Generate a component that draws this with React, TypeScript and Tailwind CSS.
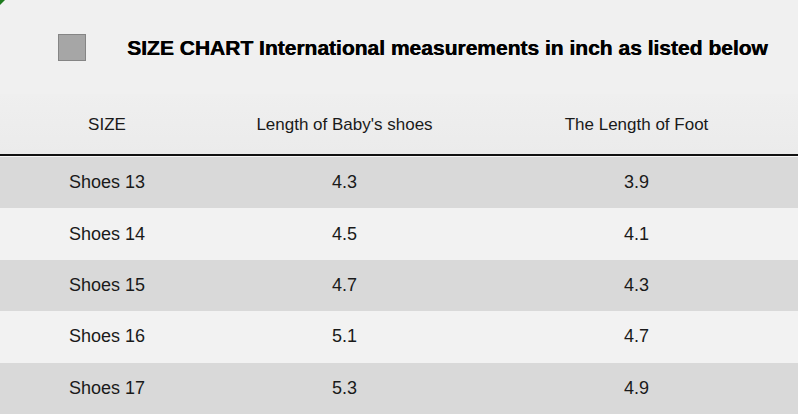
import React from 'react';

const rows = [
  { size: 'Shoes 13', shoe: '4.3', foot: '3.9' },
  { size: 'Shoes 14', shoe: '4.5', foot: '4.1' },
  { size: 'Shoes 15', shoe: '4.7', foot: '4.3' },
  { size: 'Shoes 16', shoe: '5.1', foot: '4.7' },
  { size: 'Shoes 17', shoe: '5.3', foot: '4.9' },
];

const col1 = 'w-[214px] flex justify-center';
const col2 = 'w-[261px] flex justify-center';
const col3 = 'flex-1 flex justify-center';

export default function App() {
  return (
    <div
      className="relative w-[798px] h-[414px] flex flex-col bg-[#f0f0f0] text-[#1a1a1a] overflow-hidden"
      style={{ fontFamily: '"Liberation Sans", Arial, sans-serif' }}
    >
      {/* corner mark */}
      <span className="absolute top-0 left-0 w-0 h-0 border-t-[5px] border-r-[5px] border-t-[#1d7a1d] border-r-transparent" />

      {/* ── Title ───────────────────────────── */}
      <div className="h-[94px] flex items-center pl-[58px] shrink-0">
        <span className="w-[28px] h-[27px] bg-[#a6a6a6] border border-[#858585] shrink-0" />
        <h1 className="ml-[41px] text-[21px] font-bold text-black leading-none [text-shadow:0.5px_0_0_#000]">
          SIZE CHART International measurements in inch as listed below
        </h1>
      </div>

      {/* ── Header row ──────────────────────── */}
      <div className="h-[60px] flex items-center pt-[2px] text-[17px] bg-gradient-to-b from-[#efefef] to-[#ebebeb] shrink-0">
        <div className={col1}>SIZE</div>
        <div className={col2}>Length of Baby's shoes</div>
        <div className={col3}>The Length of Foot</div>
      </div>
      <div className="h-[2px] bg-[#111] shrink-0" />
      <div className="h-[1px] bg-[#f6f6f6] shrink-0" />

      {/* ── Body rows ───────────────────────── */}
      <div className="flex-1 flex flex-col text-[18px]">
        {rows.map((r, i) => (
          <div
            key={r.size}
            className={`flex-1 flex items-center ${i % 2 === 0 ? 'bg-[#d9d9d9]' : 'bg-[#f2f2f2]'}`}
          >
            <div className={col1}>{r.size}</div>
            <div className={col2}>{r.shoe}</div>
            <div className={col3}>{r.foot}</div>
          </div>
        ))}
      </div>
    </div>
  );
}
